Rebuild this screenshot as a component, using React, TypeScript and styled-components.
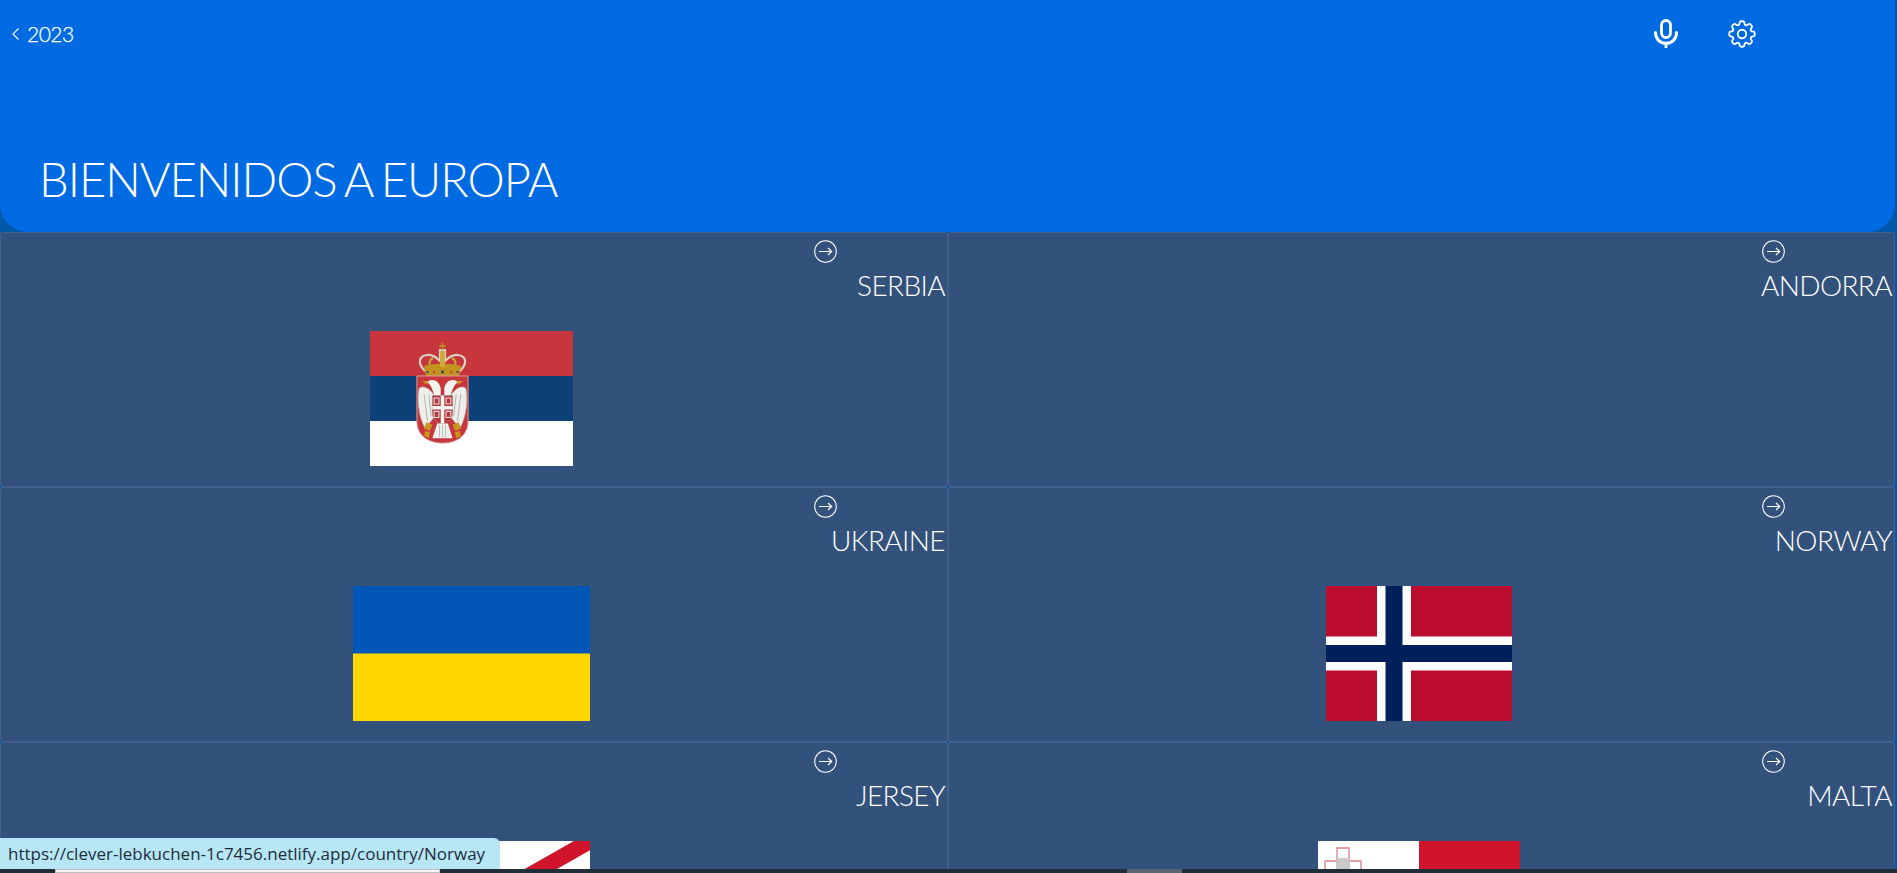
import React from "react";
import styled, { createGlobalStyle } from "styled-components";
import { HiOutlineCog8Tooth } from "react-icons/hi2";

const Global = createGlobalStyle`
  html, body { margin: 0; padding: 0; height: 100%; overflow: hidden; background: #0058ab; }
  body { font-family: "Lato", "Liberation Sans", sans-serif; font-weight: 300; color: #fff; }
  * { box-sizing: border-box; }
`;

const Page = styled.div`
  width: 1895px;
  height: 873px;
  overflow: hidden;
`;

const Header = styled.header`
  height: 232px;
  background: #006ae3;
  border-radius: 0 0 28px 28px;
  display: flex;
  flex-direction: column;
  justify-content: space-between;
`;

const TopBar = styled.div`
  display: flex;
  align-items: center;
  justify-content: space-between;
  padding: 19px 139px 0 12px;
`;

const BackLink = styled.a`
  display: flex;
  align-items: center;
  gap: 7px;
  font-size: 21px;
  line-height: 30px;
  letter-spacing: -0.5px;
  font-weight: 300;
  -webkit-text-stroke: 0.25px #fff;
  color: #fff;
`;

const Actions = styled.div`
  display: flex;
  align-items: center;
  gap: 50px;
`;

const Title = styled.h1`
  margin: 0;
  padding: 0 0 25px 39px;
  font-size: 47px;
  line-height: 56px;
  font-weight: 300;
  letter-spacing: -1px;
  word-spacing: -3px;
`;

const Grid = styled.main`
  display: grid;
  grid-template-columns: 948px 947px;
  grid-auto-rows: 255px;
`;

const Cell = styled.article`
  border: 1px solid #41608f;
  border-radius: 2px;
  background: #32527b;
  padding: 7px 3px 0 0;
  overflow: hidden;
`;

const ArrowRow = styled.div`
  height: 23px;
  padding-left: 813px;
`;

const Name = styled.h2`
  margin: 3px -1px 0 0;
  text-align: right;
  font-size: 28px;
  line-height: 38px;
  font-weight: 300;
  letter-spacing: -0.6px;
  color: #fff;
`;

const FlagSlot = styled.div`
  margin-top: 27px;
  padding-right: 2px;
  display: flex;
  justify-content: center;
  height: 135px;
`;

const FlagSvg = styled.svg`
  display: block;
  height: 135px;
`;

const StatusBubble = styled.div`
  position: fixed;
  left: 0;
  bottom: 4px;
  width: 500px;
  height: 31px;
  padding-left: 8px;
  background: #b7e6f5;
  border-top-right-radius: 6px;
  color: #1f2d3a;
  font-family: "Open Sans", "Liberation Sans", sans-serif;
  font-weight: 400;
  font-size: 17px;
  line-height: 31px;
  white-space: nowrap;
`;

const BottomBand = styled.div`
  position: fixed;
  left: 0;
  right: 0;
  bottom: 0;
  height: 4px;
  background: #202e3a;
`;

const LightThumb = styled.div`
  position: absolute;
  left: 55px;
  width: 385px;
  top: 0;
  height: 4px;
  background: #f4f4f4;
  border: 1px solid #bdbdbd;
`;

const DarkThumb = styled.div`
  position: absolute;
  left: 1127px;
  width: 55px;
  top: 0;
  height: 4px;
  background: #5a6670;
`;

const SerbiaArms = () => (
  <g>
    {/* crown */}
    <g transform="translate(4 0)">
      <path d="M51 40 C43 32 45 25 53 24 C59 23 63 27 66 30 L66 19 L71 19 L71 30 C74 27 78 23 84 24 C92 25 94 32 86 40" fill="none" stroke="#d9d3c6" strokeWidth="2.200" />
      <path d="M58 40 C54 33 55 29 59 27 M79 40 C83 33 82 29 78 27" fill="none" stroke="#c4a43a" strokeWidth="2" />
      <path d="M50 35 C60 32 77 32 87 35 L85 45 L52 45 Z" fill="#c2941f" />
      <path d="M66 20 H71 V36 H66 Z" fill="#cfa93a" />
      <path d="M68.500 12 V19 M65.500 15 H71.500" stroke="#b88a20" strokeWidth="1.800" />
      <circle cx="68.500" cy="41" r="1.400" fill="#17406e" />
      <circle cx="60" cy="41" r="1.100" fill="#b33" />
      <circle cx="77" cy="41" r="1.100" fill="#b33" />
      <circle cx="53.500" cy="41" r="1.100" fill="#17406e" />
      <circle cx="83.500" cy="41" r="1.100" fill="#17406e" />
    </g>
    {/* shield */}
    <g transform="translate(72.5 45) scale(1.19 1.22) translate(-68.5 -45)">
      <path d="M47 45 H90 V82 C90 94 80 100 68.500 100 C57 100 47 94 47 82 Z" fill="#c6363c" stroke="#dca0a0" strokeWidth=".8" />
      <path d="M49 55 C47 62 48 78 54 88 L62 78 L61 60 C58 56 53 52 49 55 Z" fill="#eeeeea" stroke="#b9b9b5" strokeWidth=".5" />
      <path d="M88 55 C90 62 89 78 83 88 L75 78 L76 60 C79 56 84 52 88 55 Z" fill="#eeeeea" stroke="#b9b9b5" strokeWidth=".5" />
      <path d="M53 60 L56 82 M57 60 L59 78 M84 60 L81 82 M80 60 L78 78" stroke="#a9a9a5" strokeWidth=".7" />
      <path d="M62 62 C60 56 59 52 55 50 C60 46 66 49 67 55 L67 62 Z" fill="#f2f2ee" />
      <path d="M75 62 C77 56 78 52 82 50 C77 46 71 49 70 55 L70 62 Z" fill="#f2f2ee" />
      <path d="M51 49 L57 49 L55 52 Z M86 49 L80 49 L82 52 Z" fill="#c8961f" />
      <path d="M60 61 H77 V75 C77 81 73 83 68.500 84 C64 83 60 81 60 75 Z" fill="#b8343c" stroke="#8f8f8f" strokeWidth=".5" />
      <path d="M67 61 H70 V84 H67 Z M60 69.500 H77 V72.500 H60 Z" fill="#f4f4f0" />
      <path d="M61.500 63 H65.500 V68 H61.500 Z M71.500 63 H75.500 V68 H71.500 Z M61.500 74 H65.500 V79 H61.500 Z M71.500 74 H75.500 V79 H71.500 Z" fill="none" stroke="#e8e0d8" strokeWidth=".9" />
      <path d="M64 84 H73 L77 96 H60 Z" fill="#efefeb" />
      <path d="M66 85 V95 M68.500 85 V96 M71 85 V95" stroke="#aaa" strokeWidth=".6" />
      <path d="M55 83 L60 85 L58 90 L53 88 Z M82 83 L77 85 L79 90 L84 88 Z M54 90 L58 91 L57 96 L53 94 Z M83 90 L79 91 L80 96 L84 94 Z" fill="#c8961f" />
    </g>
  </g>
);

const Serbia = () => (
  <FlagSvg viewBox="0 0 203 135" width={203}>
    <rect width="203" height="45" fill="#c6363c" />
    <rect y="45" width="203" height="45" fill="#0c4076" />
    <rect y="90" width="203" height="45" fill="#fff" />
    <SerbiaArms />
  </FlagSvg>
);

const Ukraine = () => (
  <FlagSvg viewBox="0 0 237 135" width={237}>
    <rect width="237" height="67.500" fill="#0057b7" />
    <rect y="67.500" width="237" height="67.500" fill="#ffd700" />
  </FlagSvg>
);

const Norway = () => (
  <FlagSvg viewBox="0 0 186 135" width={186}>
    <rect width="186" height="135" fill="#ba0c2f" />
    <rect x="51" width="34" height="135" fill="#fff" />
    <rect y="50.500" width="186" height="34" fill="#fff" />
    <rect x="59.500" width="17" height="135" fill="#00205b" />
    <rect y="59" width="186" height="17" fill="#00205b" />
  </FlagSvg>
);

const Jersey = () => (
  <FlagSvg viewBox="0 0 237 135" width={237}>
    <rect width="237" height="135" fill="#fff" />
    <path d="M0 0 L237 135 M237 0 L0 135" stroke="#cf142b" strokeWidth="16" />
  </FlagSvg>
);

const Malta = () => (
  <FlagSvg viewBox="0 0 202 135" width={202}>
    <rect width="101" height="135" fill="#fff" />
    <rect x="101" width="101" height="135" fill="#cf142b" />
    <path d="M19 7 H31 V20 H43 V32 H31 V45 H19 V32 H7 V20 H19 Z" fill="#fff" stroke="#d9808c" strokeWidth="1.300" />
    <rect x="18" y="17" width="14" height="16" rx="5" fill="#c9c9c9" />
  </FlagSvg>
);

const MicIcon = () => (
  <svg width="24" height="30" viewBox="0 0 24 30" fill="none" stroke="#fff" strokeLinecap="round">
    <rect x="7.500" y="1.500" width="9" height="17" rx="4.500" strokeWidth="2.800" />
    <path d="M1.500 13.500 C1.500 20 6 24.300 12 24.300 C18 24.300 22.500 20 22.500 13.500" strokeWidth="3" />
    <path d="M12 24.300 V29" strokeWidth="2.800" strokeLinecap="butt" />
  </svg>
);

const ChevronIcon = () => (
  <svg width="8" height="12" viewBox="0 0 8 12" fill="none" stroke="#fff" strokeWidth="1.100">
    <path d="M6.500 .5 L1 6 L6.500 11.500" />
  </svg>
);

const GoIcon = () => (
  <svg width="23" height="23" viewBox="0 0 23 23" fill="none" stroke="#fff">
    <circle cx="11.500" cy="11.500" r="10.800" strokeWidth="1.100" />
    <path d="M5 11.500 H17.500 M14 8 L17.700 11.500 L14 15" strokeWidth="1.200" />
  </svg>
);

type Country = { name: string; flag?: React.ReactNode };

const countries: Country[] = [
  { name: "SERBIA", flag: <Serbia /> },
  { name: "ANDORRA" },
  { name: "UKRAINE", flag: <Ukraine /> },
  { name: "NORWAY", flag: <Norway /> },
  { name: "JERSEY", flag: <Jersey /> },
  { name: "MALTA", flag: <Malta /> },
];

export default function App() {
  return (
    <Page>
      <Global />
      <Header>
        <TopBar>
          <BackLink>
            <ChevronIcon />
            2023
          </BackLink>
          <Actions>
            <MicIcon />
            <HiOutlineCog8Tooth size={34} color="#fff" strokeWidth={1.3} style={{ margin: "-3px" }} />
          </Actions>
        </TopBar>
        <Title>BIENVENIDOS A EUROPA</Title>
      </Header>
      <Grid>
        {countries.map((c) => (
          <Cell key={c.name}>
            <ArrowRow>
              <GoIcon />
            </ArrowRow>
            <Name>{c.name}</Name>
            <FlagSlot>{c.flag}</FlagSlot>
          </Cell>
        ))}
      </Grid>
      <BottomBand>
        <LightThumb />
        <DarkThumb />
      </BottomBand>
      <StatusBubble>https://clever-lebkuchen-1c7456.netlify.app/country/Norway</StatusBubble>
    </Page>
  );
}
